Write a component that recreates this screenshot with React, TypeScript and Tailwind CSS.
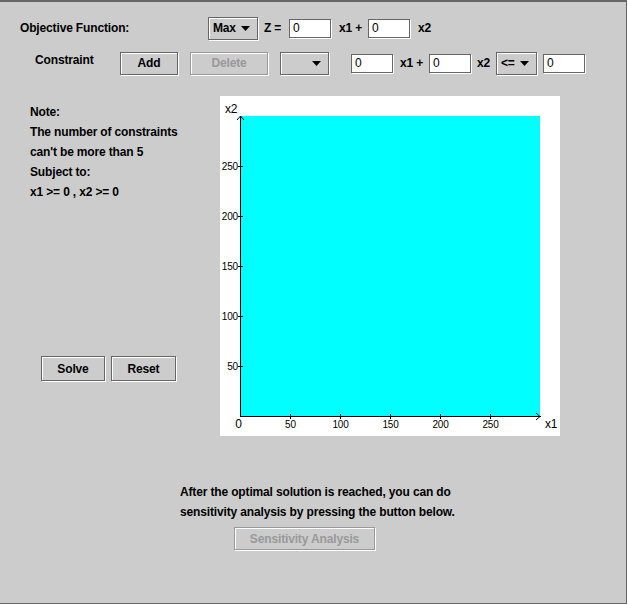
import type { ReactNode } from "react";
import clsx from "clsx";

const font = { fontFamily: '"Liberation Sans", Arial, sans-serif' };

// etched look of the old Metal widgets: dark frame, white highlight
const etched = "shrink-0 border shadow-[inset_1px_1px_0_#fff,1px_1px_0_#fff]";

const Button = ({
    children,
    disabled,
    className,
}: {
    children: ReactNode;
    disabled?: boolean;
    className?: string;
}) => (
    <div
        className={clsx(
            etched,
            "flex items-center justify-center whitespace-nowrap text-[12px] font-bold",
            disabled ? "border-[#999] text-[#999]" : "border-[#666] text-black",
            className
        )}
    >
        {children}
    </div>
);

const Arrow = () => (
    <svg width="9" height="5" viewBox="0 0 9 5">
        <polygon points="0,0 9,0 4.5,5" fill="#000" />
    </svg>
);

const Dropdown = ({ label, className }: { label?: string; className?: string }) => (
    <div
        className={clsx(
            etched,
            "flex h-[23px] items-center justify-between border-[#666] pl-[4px] pr-[7px] text-[12px] font-bold",
            className
        )}
    >
        <span>{label}</span>
        <Arrow />
    </div>
);

const Field = ({ className }: { className?: string }) => (
    <div
        className={clsx(
            etched,
            "flex h-[19px] w-[42px] items-center border-[#666] bg-white pl-[3px] text-[12px] font-normal",
            className
        )}
    >
        0
    </div>
);

const Label = ({ children, className }: { children: ReactNode; className?: string }) => (
    <span className={clsx("shrink-0 whitespace-nowrap", className)}>{children}</span>
);

const Chart = () => {
    const ticks = [50, 100, 150, 200, 250];
    return (
        <svg width="340" height="340" viewBox="0 0 340 340" className="shrink-0 bg-white" style={font}>
            <rect x="20" y="20" width="300" height="300" fill="#00ffff" />
            <line x1="20.5" y1="20" x2="20.5" y2="321" stroke="#000" />
            <line x1="20" y1="320.5" x2="321" y2="320.5" stroke="#000" />
            <polyline points="17,24 20.5,20 24,24" fill="none" stroke="#000" />
            <polyline points="316,317 320,320.5 316,324" fill="none" stroke="#000" />
            {ticks.map((v) => (
                <g key={"y" + v}>
                    <line x1="18" y1={320.5 - v} x2="23" y2={320.5 - v} stroke="#000" />
                    <text x="18" y={324 - v} fontSize="10" textAnchor="end">
                        {v}
                    </text>
                </g>
            ))}
            {ticks.map((v) => (
                <g key={"x" + v}>
                    <line x1={20.5 + v} y1="318" x2={20.5 + v} y2="323" stroke="#000" />
                    <text x={20.5 + v} y="332" fontSize="10" textAnchor="middle">
                        {v}
                    </text>
                </g>
            ))}
            <text x="18.5" y="332" fontSize="12" textAnchor="middle">
                0
            </text>
            <text x="325" y="332" fontSize="12">
                x1
            </text>
            <text x="5" y="17" fontSize="12">
                x2
            </text>
        </svg>
    );
};

export default function App() {
    return (
        <div
            className="box-border h-[604px] w-[627px] border-t-2 border-r border-b border-[#666] bg-[#cccccc] text-black tracking-[-0.15px]"
            style={font}
        >
            {/* Objective function */}
            <div className="mt-[14px] flex h-[24px] items-center pl-[20px] text-[12px] font-bold">
                <Label className="w-[188px]">Objective Function:</Label>
                <Dropdown label="Max" className="w-[50px]" />
                <Label className="ml-[6px] w-[25px]">Z =</Label>
                <Field />
                <Label className="ml-[8px] w-[29px]">x1 +</Label>
                <Field />
                <Label className="ml-[8px]">x2</Label>
            </div>

            {/* Constraint row */}
            <div className="mt-[11px] flex h-[24px] items-center pl-[35px] text-[12px] font-bold">
                <Label className="mb-[6px] w-[85px]">Constraint</Label>
                <Button className="h-[23px] w-[58px]">Add</Button>
                <Button disabled className="ml-[12px] h-[23px] w-[78px]">
                    Delete
                </Button>
                <Dropdown className="ml-[12px] w-[49px]" />
                <Field className="ml-[22px]" />
                <Label className="ml-[7px] w-[29px]">x1 +</Label>
                <Field />
                <Label className="ml-[6px] w-[19px]">x2</Label>
                <Dropdown label="<=" className="w-[41px]" />
                <Field className="ml-[6px]" />
            </div>

            {/* Notes + chart */}
            <div className="mt-[21px] flex">
                <div className="w-[220px] shrink-0 pl-[30px] text-[12px] font-bold leading-[20px]">
                    <div className="pt-[6px]">
                        <p>Note:</p>
                        <p>The number of constraints</p>
                        <p>can't be more than 5</p>
                        <p>Subject to:</p>
                        <p>x1 &gt;= 0 , x2 &gt;= 0</p>
                    </div>
                    <div className="mt-[154px] ml-[11px] flex gap-[6px]">
                        <Button className="h-[25px] w-[64px]">Solve</Button>
                        <Button className="h-[25px] w-[65px]">Reset</Button>
                    </div>
                </div>
                <Chart />
            </div>

            {/* Sensitivity */}
            <div className="mt-[46px] pl-[180px] text-[12px] font-bold leading-[20px]">
                <p>After the optimal solution is reached, you can do</p>
                <p>sensitivity analysis by pressing the button below.</p>
                <Button disabled className="mt-[5px] ml-[54px] h-[23px] w-[141px]">
                    Sensitivity Analysis
                </Button>
            </div>
        </div>
    );
}
